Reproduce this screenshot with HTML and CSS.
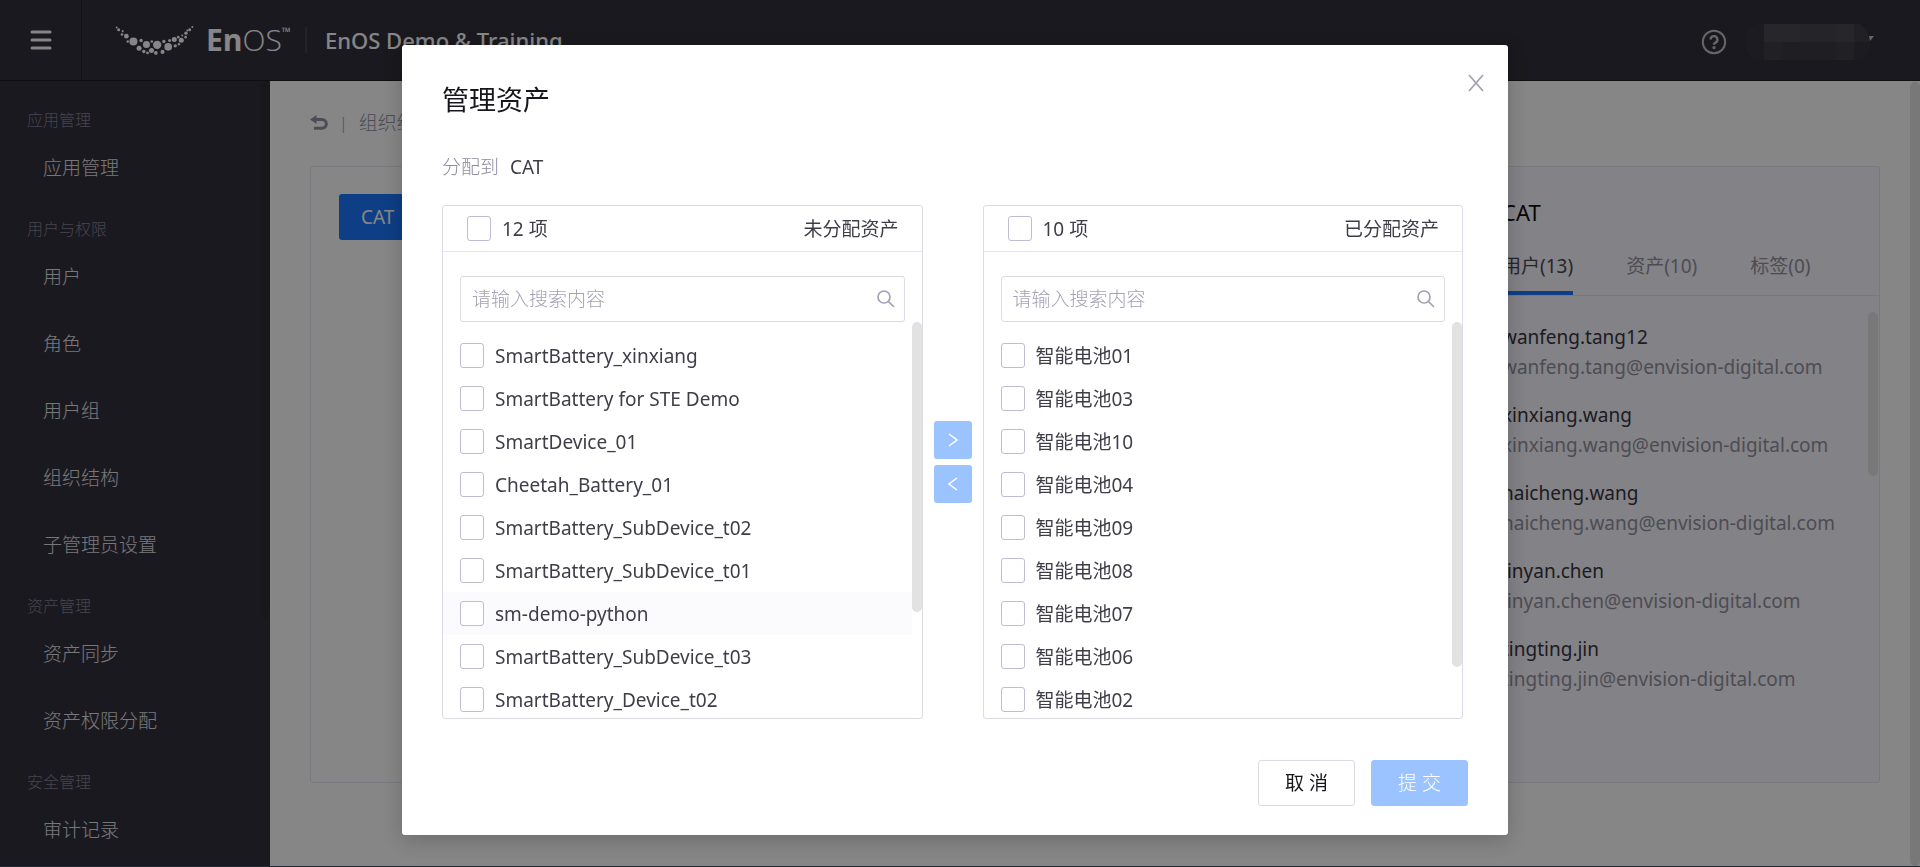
FILE: index.html
```html
<!DOCTYPE html>
<html lang="zh-CN">
<head>
<meta charset="utf-8">
<title>EnOS</title>
<link rel="stylesheet" href="styles.css">
</head>
<body>
<div class="app">
  <header class="topbar">
    <button class="menu-btn" aria-label="菜单">
      <svg width="22" height="20" viewBox="0 0 22 20"><path d="M2 2h18M2 10h18M2 18h18" stroke="currentColor" stroke-width="3" stroke-linecap="round"/></svg>
    </button>
    <div class="brand">
      <svg class="brand-mark" width="79" height="31" viewBox="16 30 236 92" fill="currentColor">
        <circle cx="21" cy="37" r="3"/><circle cx="27" cy="44" r="4.5"/><circle cx="39" cy="48" r="3"/><circle cx="37" cy="58" r="4"/><circle cx="50" cy="63" r="7"/><circle cx="54" cy="79" r="3.5"/><circle cx="71" cy="79" r="12"/><circle cx="94" cy="76" r="5"/><circle cx="88" cy="99" r="7.5"/><circle cx="110" cy="88" r="10.5"/><circle cx="102" cy="109" r="5"/><circle cx="113" cy="113" r="4"/><circle cx="126" cy="79" r="4"/><circle cx="125" cy="106" r="7.5"/><circle cx="142" cy="89" r="12.5"/><circle cx="138" cy="113" r="5.5"/><circle cx="158" cy="110" r="6"/><circle cx="162" cy="79" r="5"/><circle cx="175" cy="95" r="11.5"/><circle cx="179" cy="76" r="4.5"/><circle cx="193" cy="73" r="7.5"/><circle cx="196" cy="92" r="5"/><circle cx="205" cy="66" r="4"/><circle cx="207" cy="87" r="3.5"/><circle cx="214" cy="75" r="7.5"/><circle cx="217" cy="61" r="3"/><circle cx="228" cy="54" r="5"/><circle cx="227" cy="66" r="4"/><circle cx="232" cy="46" r="3"/><circle cx="239" cy="44" r="4.5"/><circle cx="247" cy="36" r="3"/>
      </svg>
      <span class="brand-name"><b>En</b>OS<small>™</small></span>
      <span class="brand-title">EnOS Demo &amp; Training</span>
    </div>
    <div class="account">
      <button class="help" aria-label="帮助">
        <svg width="26" height="26" viewBox="0 0 26 26" fill="none" stroke="currentColor" stroke-width="2"><circle cx="13" cy="13" r="11.2"/><path d="M9.6 10.6a3.4 3.4 0 1 1 4.9 3c-1 .5-1.5 1-1.5 2.2" stroke-width="2.3"/><circle cx="13" cy="18.6" r=".7"/></svg>
      </button>
      <button class="user" aria-label="用户">
        <svg width="128" height="36" viewBox="0 0 128 36">
          <rect width="124" height="36" rx="14" fill="#2a2932"/>
          <path fill="#403f47" d="M18 0h18v18H18zM36 0h18v18H36zM90 0h18v18H90z"/><path fill="#3c3b43" d="M54 0h36v18H54z"/><path fill="#33323b" d="M18 18h90v18H18zM108 0h6q8 4 9 18h-15z"/><path fill="#2f2e37" d="M36 18h54v18H36z"/>
          <path d="M123 12h5l-4 5z" fill="#c0c0c4"/>
        </svg>
      </button>
    </div>
  </header>
  <div class="body">
    <nav class="sidebar">
      <h2 class="nav-group">应用管理</h2>
      <a class="nav-item" href="#">应用管理</a>
      <h2 class="nav-group">用户与权限</h2>
      <a class="nav-item" href="#">用户</a>
      <a class="nav-item" href="#">角色</a>
      <a class="nav-item" href="#">用户组</a>
      <a class="nav-item" href="#">组织结构</a>
      <a class="nav-item" href="#">子管理员设置</a>
      <h2 class="nav-group">资产管理</h2>
      <a class="nav-item" href="#">资产同步</a>
      <a class="nav-item" href="#">资产权限分配</a>
      <h2 class="nav-group">安全管理</h2>
      <a class="nav-item" href="#">审计记录</a>
      <div class="nav-scroll"></div>
    </nav>
    <main class="main">
      <div class="crumbs">
        <svg width="18" height="16" viewBox="0 0 18 16" fill="none"><path d="M4 4.5h8a4.2 4.2 0 0 1 0 8.700H4" stroke="currentColor" stroke-width="3"/><path d="M0 4.500 6.500 0v9z" fill="currentColor"/></svg>
        <span class="crumb-sep">|</span>
        <span>组织结构</span>
      </div>
      <div class="cards">
        <section class="tree-card"><button class="node">CAT</button></section>
        <section class="detail-card">
          <h2 class="detail-title">CAT</h2>
          <div class="tabs">
            <button class="tab tab-on">用户(13)</button>
            <button class="tab">资产(10)</button>
            <button class="tab">标签(0)</button>
          </div>
          <ul class="users">
            <li><span class="u-name">wanfeng.tang12</span><span class="u-mail">wanfeng.tang@envision-digital.com</span></li>
            <li><span class="u-name">xinxiang.wang</span><span class="u-mail">xinxiang.wang@envision-digital.com</span></li>
            <li><span class="u-name">haicheng.wang</span><span class="u-mail">haicheng.wang@envision-digital.com</span></li>
            <li><span class="u-name">jinyan.chen</span><span class="u-mail">jinyan.chen@envision-digital.com</span></li>
            <li><span class="u-name">tingting.jin</span><span class="u-mail">tingting.jin@envision-digital.com</span></li>
          </ul>
          <div class="users-scroll"></div>
        </section>
      </div>
      <div class="page-scroll"></div>
    </main>
  </div>
</div>

<div class="mask">
  <div class="modal" role="dialog" aria-labelledby="dlg-title">
    <button class="close" aria-label="关闭">
      <svg width="16" height="18" viewBox="0 0 16 18"><path d="M1 1l14 16M15 1L1 17" stroke="currentColor" stroke-width="1.800"/></svg>
    </button>
    <h1 class="modal-title" id="dlg-title">管理资产</h1>
    <p class="assign"><span>分配到</span><strong>CAT</strong></p>
    <div class="transfer">
      <section class="pane">
        <div class="pane-head"><label class="check"><input type="checkbox">12 项</label><span>未分配资产</span></div>
        <div class="search">
          <input type="text" placeholder="请输入搜索内容" aria-label="搜索未分配资产">
          <svg width="18" height="18" viewBox="0 0 18 18" fill="none" stroke="currentColor" stroke-width="1.700"><circle cx="7" cy="7" r="6"/><path d="M11.300 11.300 17 17"/></svg>
        </div>
        <ul class="list">
          <li><label class="check"><input type="checkbox">SmartBattery_xinxiang</label></li>
          <li><label class="check"><input type="checkbox">SmartBattery for STE Demo</label></li>
          <li><label class="check"><input type="checkbox">SmartDevice_01</label></li>
          <li><label class="check"><input type="checkbox">Cheetah_Battery_01</label></li>
          <li><label class="check"><input type="checkbox">SmartBattery_SubDevice_t02</label></li>
          <li><label class="check"><input type="checkbox">SmartBattery_SubDevice_t01</label></li>
          <li class="hover"><label class="check"><input type="checkbox">sm-demo-python</label></li>
          <li><label class="check"><input type="checkbox">SmartBattery_SubDevice_t03</label></li>
          <li><label class="check"><input type="checkbox">SmartBattery_Device_t02</label></li>
        </ul>
        <div class="list-scroll"></div>
      </section>
      <div class="ops">
        <button class="op" aria-label="分配" disabled><svg width="10" height="14" viewBox="0 0 10 14" fill="none" stroke="currentColor" stroke-width="1.500"><path d="M1 1l8 6-8 6"/></svg></button>
        <button class="op" aria-label="移除" disabled><svg width="10" height="14" viewBox="0 0 10 14" fill="none" stroke="currentColor" stroke-width="1.500"><path d="M9 1L1 7l8 6"/></svg></button>
      </div>
      <section class="pane">
        <div class="pane-head"><label class="check"><input type="checkbox">10 项</label><span>已分配资产</span></div>
        <div class="search">
          <input type="text" placeholder="请输入搜索内容" aria-label="搜索已分配资产">
          <svg width="18" height="18" viewBox="0 0 18 18" fill="none" stroke="currentColor" stroke-width="1.700"><circle cx="7" cy="7" r="6"/><path d="M11.300 11.300 17 17"/></svg>
        </div>
        <ul class="list">
          <li><label class="check"><input type="checkbox">智能电池01</label></li>
          <li><label class="check"><input type="checkbox">智能电池03</label></li>
          <li><label class="check"><input type="checkbox">智能电池10</label></li>
          <li><label class="check"><input type="checkbox">智能电池04</label></li>
          <li><label class="check"><input type="checkbox">智能电池09</label></li>
          <li><label class="check"><input type="checkbox">智能电池08</label></li>
          <li><label class="check"><input type="checkbox">智能电池07</label></li>
          <li><label class="check"><input type="checkbox">智能电池06</label></li>
          <li><label class="check"><input type="checkbox">智能电池02</label></li>
        </ul>
        <div class="list-scroll list-scroll-long"></div>
      </section>
    </div>
    <div class="actions">
      <button class="btn">取 消</button>
      <button class="btn btn-primary" disabled>提 交</button>
    </div>
  </div>
</div>
</body>
</html>
```

FILE: styles.css
```css
* { box-sizing: border-box; }
html, body { height: 100%; }
body {
  margin: 0;
  overflow: hidden;
  font: 300 19px/28px "Noto Sans", "Noto Sans CJK SC", sans-serif;
  color: #3f3d47;
}
button { font: inherit; color: inherit; border: 0; padding: 0; background: none; }
h1, h2, p, ul { margin: 0; padding: 0; font-weight: inherit; list-style: none; }
svg { display: block; flex: none; }

.app { height: 100%; display: flex; flex-direction: column; border-bottom: 1px solid #2c4a54; }

.topbar { display: flex; align-items: stretch; height: 81px; flex: none; background: #27252e; border-bottom: 1px solid #100f14; color: #fff; }
.menu-btn { width: 82px; display: flex; align-items: center; justify-content: center; border-right: 1px solid #17161b; }
.brand { flex: 1; display: flex; align-items: center; padding-left: 33px; }
.brand-name { display: flex; margin-left: 12px; font: 300 30px/36px "Open Sans", sans-serif; }
.brand-name b { font-weight: 700; }
.brand-name small { font-size: 12px; line-height: 20px; font-weight: 400; }
.brand-title { margin-left: 14px; padding-left: 18px; border-left: 2px solid #3a3942; font-size: 22px; line-height: 26px; font-weight: 500; }
.account { display: flex; align-items: center; gap: 19px; padding: 4px 46px 0 0; }
.help { color: #c0c0c4; }

.body { flex: 1; display: flex; min-height: 0; }
.sidebar { position: relative; width: 270px; flex: none; padding-top: 12px; background: #27252e; overflow: hidden; }
.nav-group { padding: 15px 27px 3px; font-size: 16px; line-height: 24px; color: #7d7b8e; }
.nav-item { display: block; padding-left: 43px; line-height: 67px; color: #e0e0e4; text-decoration: none; }
.nav-scroll { position: absolute; right: 0; top: 1px; width: 10px; height: 536px; border-radius: 5px; background: #232129; }

.main { position: relative; flex: 1; min-width: 0; padding: 28px 40px 0; background: #fff; }
.crumbs { display: flex; align-items: center; color: #8d8b99; }
.crumb-sep { margin: 0 11px; font-size: 16px; }
.cards { display: flex; gap: 20px; margin-top: 29px; height: 617px; }
.tree-card { flex: 1; padding: 27px 28px; border: 1px solid #e4e2ec; border-radius: 3px; }
.node { height: 46px; padding: 0 22px; border-radius: 3px; background: #0f6ffa; color: #fff; font-weight: 400; }
.detail-card { position: relative; width: 420px; padding-top: 29px; border: 1px solid #e4e2ec; border-radius: 3px; background: #f9f7fc; }
.detail-title { padding-left: 41px; font-size: 22px; line-height: 32px; font-weight: 400; color: #000; }
.tabs { display: flex; gap: 53px; margin-top: 12px; padding-left: 41px; border-bottom: 1px solid #e4e2ec; }
.tab { padding: 12px 0 11px; border-bottom: 4px solid transparent; color: #8d8b99; font-weight: 400; }
.tab-on { color: #3f3d47; border-color: #0f6ffa; }
.users { padding: 26px 0 0 41px; font-weight: 400; }
.users li { display: flex; flex-direction: column; margin-bottom: 18px; line-height: 30px; }
.u-name { color: #2c2a33; }
.u-mail { color: #8d8b99; }
.users-scroll { position: absolute; right: 1px; top: 145px; width: 10px; height: 164px; border-radius: 5px; background: #e2e2e2; }
.page-scroll { position: absolute; right: 0; top: 1px; bottom: 0; width: 10px; border-radius: 5px; background: #e2e2e2; }

.mask { position: fixed; inset: 0; display: flex; justify-content: center; align-items: flex-start; padding: 45px 10px 0 0; background: rgba(13, 13, 16, .5); }
.modal { position: relative; width: 1106px; padding: 37px 40px 29px; border-radius: 3px; background: #fff; box-shadow: 0 5px 20px rgba(0, 0, 0, .2); }
.close { position: absolute; right: 24px; top: 29px; color: #a3a1b3; }
.modal-title { font-size: 27px; line-height: 36px; font-weight: 400; color: #17161b; }
.assign { display: flex; gap: 11px; margin-top: 34px; line-height: 30px; color: #8d8b9f; }
.assign strong { font-weight: 400; color: #3f3d47; }
.transfer { display: flex; margin: 23px 5px 0 0; }
.pane { position: relative; flex: 1; min-width: 0; border: 1px solid #dcdae6; border-radius: 3px; }
.pane-head { display: flex; align-items: center; justify-content: space-between; height: 46px; padding: 0 23px 0 24px; border-bottom: 1px solid #e4e2ec; font-weight: 400; }
.check { display: flex; align-items: center; gap: 11px; white-space: pre; }
.check input { appearance: none; width: 24px; height: 25px; margin: 0; border: 1px solid #bfbdd2; border-radius: 3px; background: #fff; }
.search { display: flex; align-items: center; margin: 24px 17px 0; height: 46px; padding: 0 9px 0 11px; border: 1px solid #dcdae6; border-radius: 3px; color: #a3a1b3; }
.search input { flex: 1; min-width: 0; border: 0; padding: 0; outline: 0; background: none; font: inherit; color: #3f3d47; }
.search input::placeholder { color: #a3a1b3; opacity: 1; }
.list { height: 396px; padding-top: 12px; overflow: hidden; font-weight: 400; }
.list li { display: flex; align-items: center; height: 43px; margin-right: 10px; padding-left: 17px; }
.list .hover { background: #fbfafd; }
.list-scroll { position: absolute; right: 0; top: 116px; width: 10px; height: 290px; border-radius: 5px; background: #e2e2e2; }
.list-scroll-long { height: 345px; }
.ops { display: flex; flex-direction: column; justify-content: center; gap: 6px; padding: 0 11px; }
.op { display: flex; align-items: center; justify-content: center; width: 38px; height: 38px; border-radius: 3px; background: #9bc3ff; color: #fff; }
.actions { display: flex; justify-content: flex-end; gap: 16px; margin-top: 41px; }
.btn { width: 97px; height: 46px; border: 1px solid #dcdae6; border-radius: 3px; color: #17161b; font-weight: 400; }
.btn-primary { border-color: #9bc3ff; background: #9bc3ff; color: #fff; font-weight: 300; }
```
